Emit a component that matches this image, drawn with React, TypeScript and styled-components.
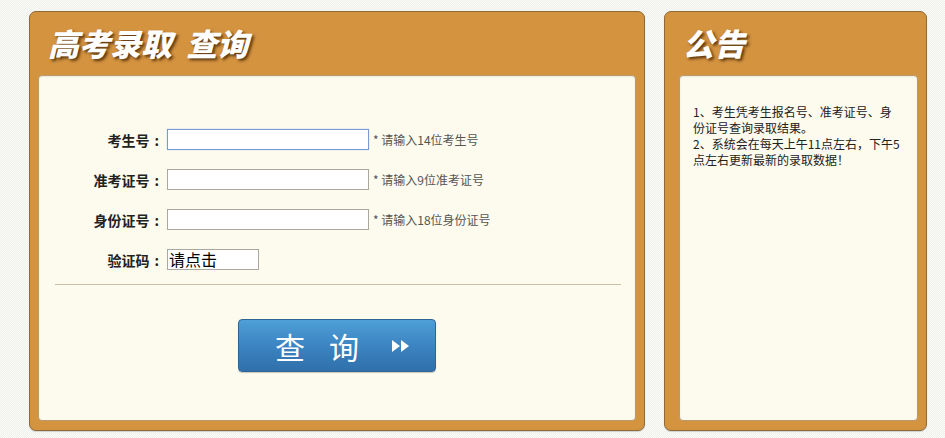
import React from 'react';
import styled, { createGlobalStyle } from 'styled-components';

const GlobalStyle = createGlobalStyle`
  html, body {
    margin: 0;
    padding: 0;
  }
  body {
    background: repeating-conic-gradient(#efefec 0 25%, #fbfbf9 0 50%) 0 0 / 2px 2px;
    font-family: "Noto Sans CJK SC", "Noto Sans", sans-serif;
    width: 945px;
    height: 438px;
    overflow: hidden;
  }
`;

const Page = styled.div`
  display: flex;
  gap: 19px;
  padding: 11px 0 0 29px;
`;

const Panel = styled.div<{ $width: number }>`
  width: ${(p) => p.$width}px;
  height: 420px;
  box-sizing: border-box;
  background: #d4933f;
  border: 1px solid #8d6a36;
  border-radius: 7px;
  display: flex;
  flex-direction: column;
  box-shadow: 0 1px 1px rgba(0, 0, 0, 0.15);
`;

const Title = styled.h1`
  margin: 0;
  height: 63px;
  padding: 0 0 2px 18px;
  box-sizing: border-box;
  display: flex;
  align-items: center;
  color: #fff;
  font-size: 31px;
  font-weight: 900;
  font-style: italic;
  text-shadow: 2px 2px 3px rgba(60, 30, 0, 0.8);
  white-space: pre;
`;

const Inner = styled.div<{ $left: number; $right: number }>`
  flex: 1;
  margin: 0 ${(p) => p.$right}px 9px ${(p) => p.$left}px;
  background: #fdfaee;
  border: 1px solid #b99a6a;
  border-radius: 4px;
  box-shadow: inset 0 1px 2px rgba(0, 0, 0, 0.08);
`;

const Form = styled.div`
  display: grid;
  grid-template-columns: 124px 202px auto;
  column-gap: 4px;
  row-gap: 19px;
  align-items: center;
  padding-top: 53px;
`;

const Label = styled.div`
  text-align: right;
  padding-right: 4px;
  font-size: 14px;
  font-weight: bold;
  color: #222;
  white-space: nowrap;
`;

const Colon = styled.span`
  margin-left: 5px;
`;

const Input = styled.div<{ $focus?: boolean }>`
  height: 21px;
  box-sizing: border-box;
  background: #fff;
  border: 1px solid ${(p) => (p.$focus ? '#7a9cd3' : '#aaa6a0')};
  box-shadow: ${(p) => (p.$focus ? '0 0 1px #9ab8e8' : 'none')};
`;

const Hint = styled.div`
  font-size: 12px;
  color: #555;
  white-space: nowrap;
`;

const Captcha = styled.div`
  width: 92px;
  height: 21px;
  box-sizing: border-box;
  background: #fff;
  border: 1px solid #aaa6a0;
  font-size: 16px;
  line-height: 18px;
  color: #000;
  padding-left: 1px;
`;

const Divider = styled.hr`
  margin: 14px 14px 0 16px;
  border: none;
  border-top: 1px solid #c9c0a6;
`;

const ButtonRow = styled.div`
  display: flex;
  justify-content: center;
  padding-top: 34px;
`;

const QueryButton = styled.button`
  width: 198px;
  height: 53px;
  display: flex;
  align-items: center;
  justify-content: center;
  gap: 22px;
  border: 1px solid #2d6596;
  border-radius: 4px;
  background: linear-gradient(#4f9fd8, #3a82c0 55%, #2f70aa);
  color: #fff;
  font-family: "Noto Sans CJK SC", sans-serif;
  font-size: 30px;
  letter-spacing: 24px;
  padding: 0 0 0 12px;
  box-shadow: 0 1px 1px rgba(0, 0, 0, 0.2);
  cursor: pointer;

  & > svg {
    margin-left: -14px;
  }
`;

const Notice = styled.div`
  padding: 28px 0 0 13px;
  width: 209px;
  font-size: 12px;
  line-height: 16px;
  color: #222;
`;

const fields = [
  { label: '考生号', hint: '* 请输入14位考生号', focus: true },
  { label: '准考证号', hint: '* 请输入9位准考证号' },
  { label: '身份证号', hint: '* 请输入18位身份证号' },
];

const App = () => {
  return (
    <>
      <GlobalStyle />
      <Page>
        <Panel $width={616}>
          <Title>{'高考录取  查询'}</Title>
          <Inner $left={8} $right={8}>
            <Form>
              {fields.map((f) => (
                <React.Fragment key={f.label}>
                  <Label>
                    {f.label}
                    <Colon>:</Colon>
                  </Label>
                  <Input $focus={f.focus} />
                  <Hint>{f.hint}</Hint>
                </React.Fragment>
              ))}

              <Label>
                验证码<Colon>:</Colon>
              </Label>
              <Captcha>请点击</Captcha>
              <div />
            </Form>
            <Divider />
            <ButtonRow>
              <QueryButton>
                查询
                <svg width="20" height="14" viewBox="0 0 20 14">
                  <path d="M1 1 L9 7 L1 13 Z" fill="#fff" />
                  <path d="M10 1 L18 7 L10 13 Z" fill="#fff" />
                </svg>
              </QueryButton>
            </ButtonRow>
          </Inner>
        </Panel>
        <Panel $width={263}>
          <Title>公告</Title>
          <Inner $left={14} $right={8}>
            <Notice>
              1、考生凭考生报名号、准考证号、身份证号查询录取结果。
              <br />
              2、系统会在每天上午11点左右，下午5点左右更新最新的录取数据！
            </Notice>
          </Inner>
        </Panel>
      </Page>
    </>
  );
};

export default App;
